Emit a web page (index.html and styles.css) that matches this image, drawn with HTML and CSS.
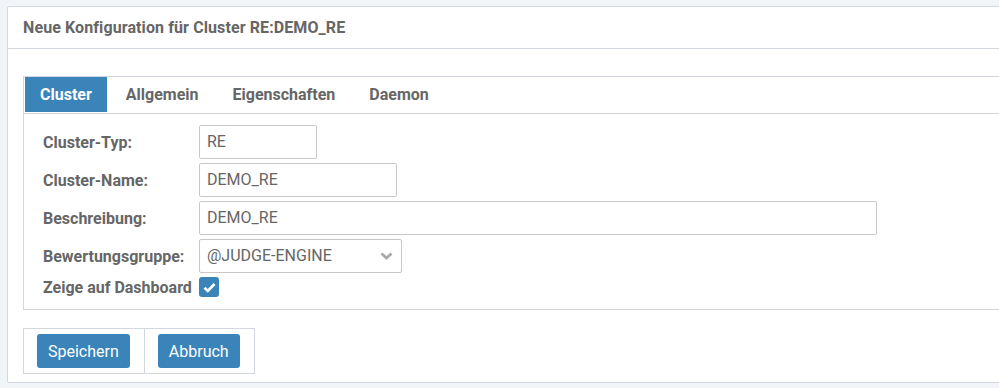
FILE: index.html
```html
<!DOCTYPE html>
<html>
<head>
	<meta charset="utf-8">
	<title>Neue Konfiguration</title>
	<link rel="stylesheet" href="styles.css">
</head>
<body>

<div class="panel">
	<div class="panel-head">Neue Konfiguration für Cluster RE:DEMO_RE</div>
	<div class="panel-body">
		<div class="tabs">
			<ul class="tab-bar">
				<li class="tab active">Cluster</li>
				<li class="tab">Allgemein</li>
				<li class="tab">Eigenschaften</li>
				<li class="tab">Daemon</li>
			</ul>
			<div class="tab-content">
				<div class="row">
					<label>Cluster-Typ:</label>
					<div class="field f-typ">RE</div>
				</div>
				<div class="row">
					<label>Cluster-Name:</label>
					<div class="field f-name">DEMO_RE</div>
				</div>
				<div class="row">
					<label>Beschreibung:</label>
					<div class="field f-desc">DEMO_RE</div>
				</div>
				<div class="row">
					<label>Bewertungsgruppe:</label>
					<div class="field f-select">
						@JUDGE-ENGINE
						<svg class="chev" width="13" height="8" viewBox="0 0 13 8">
							<path d="M1.5 1.5 L6.5 6 L11.5 1.5" fill="none" stroke="#a9a9a9" stroke-width="2.8"/>
						</svg>
					</div>
				</div>
				<div class="row row-check">
					<label>Zeige auf Dashboard</label>
					<span class="check">
						<svg width="13" height="11" viewBox="0 0 13 11">
							<path d="M1.5 5.8 L4.8 9 L11.5 2" fill="none" stroke="#fff" stroke-width="2.6"/>
						</svg>
					</span>
				</div>
			</div>
		</div>

		<div class="actions">
			<div class="cell"><button class="btn">Speichern</button></div>
			<div class="cell"><button class="btn">Abbruch</button></div>
		</div>
	</div>
</div>

</body>
</html>
```

FILE: styles.css
```css
*{
	margin: 0;
	padding: 0;
	box-sizing: border-box;
	list-style: none;
}

body{
	background-color: #f1f5f9;
	font-family: Roboto, "Liberation Sans", sans-serif;
	font-size: 16px;
	color: #666;
	padding: 6px 0 0 7px;
	overflow: hidden;
}

.panel{
	width: 1010px;
	height: 377px;
	background-color: #fff;
	border: 1px solid #d2d6de;
	border-radius: 2px;
}

.panel-head{
	height: 42px;
	line-height: 41px;
	padding-left: 15px;
	font-weight: bold;
	letter-spacing: 0.1px;
	border-bottom: 1px solid #d2d6de;
}

.panel-body{
	padding: 27px 0 0 15px;
}

.tabs{
	border: 1px solid #d2d6de;
	border-right: none;
}

.tab-bar{
	display: flex;
	padding: 0 1px;
	height: 37px;
	border-bottom: 1px solid #d2d6de;
}

.tab{
	padding: 0 15px;
	margin-right: 4px;
	height: 35px;
	line-height: 35px;
	font-weight: bold;
	color: #666;
}

.tab.active{
	background-color: #3a84b9;
	color: #fff;
}

.tab-content{
	padding: 11px 0 12px 19px;
	display: flex;
	flex-direction: column;
	gap: 4px;
}

.row{
	display: grid;
	grid-template-columns: 156px auto;
	align-items: center;
	justify-items: start;
}

.row label{
	font-weight: bold;
	white-space: nowrap;
}

.field{
	height: 34px;
	line-height: 32px;
	border: 1px solid #c6c8cc;
	border-radius: 2px;
	padding: 0 7px;
	color: #666;
}

.f-typ{
	width: 118px;
}

.f-name{
	width: 198px;
}

.f-desc{
	width: 678px;
}

.f-select{
	width: 203px;
	display: flex;
	justify-content: space-between;
	align-items: center;
	padding-right: 8px;
}

.row-check{
	height: 20px;
}

.check{
	width: 20px;
	height: 20px;
	border-radius: 3px;
	background-color: #3a84b9;
	display: flex;
	align-items: center;
	justify-content: center;
}

.actions{
	margin-top: 18px;
	display: inline-flex;
	border: 1px solid #d2d6de;
}

.cell{
	padding: 5px 14px 5px 13px;
	border-right: 1px solid #d2d6de;
}

.cell:last-child{
	border-right: none;
}

.btn{
	height: 34px;
	padding: 0 11px;
	border: none;
	border-radius: 3px;
	background-color: #3a84b9;
	color: #fff;
	font-family: Roboto, "Liberation Sans", sans-serif;
	font-size: 16px;
}
```
